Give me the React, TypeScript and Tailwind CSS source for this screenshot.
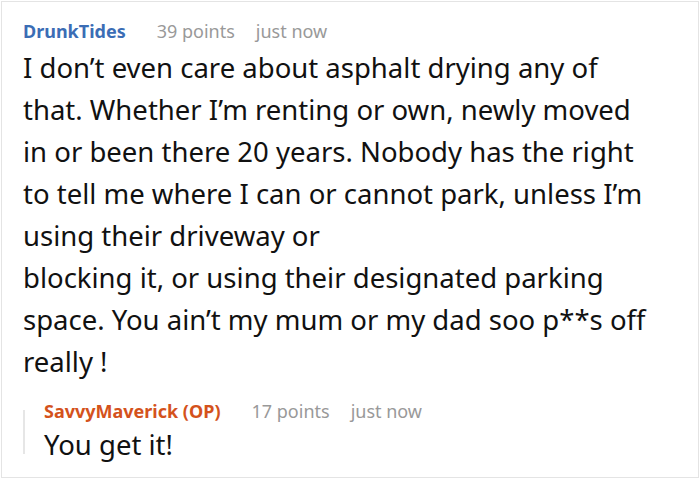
import React from 'react';

// Comment with a single reply
interface MetaProps {
  name: string;
  points: number;
  time: string;
  nameColor: string;
}

const Meta: React.FC<MetaProps> = ({ name, points, time, nameColor }) => (
  <div className="flex items-baseline text-[18px] leading-[24px]">
    <span className={`font-bold ${nameColor} mr-[31px]`}>{name}</span>
    <span className="text-[#999999] mr-[21px]">{points} points</span>
    <span className="text-[#999999]">{time}</span>
  </div>
);

export default function App() {
  return (
    <div className="bg-white w-[700px] h-[478px] overflow-hidden" style={{ fontFamily: '"Noto Sans", "Open Sans", sans-serif' }}>
      <div className="ml-px mt-px w-[698px] h-[477px] border border-[#e4e4e4] pl-[21px] pt-[17px]">
        <Meta name="DrunkTides" points={39} time="just now" nameColor="text-[#3b6db5]" />
        <p className="mt-[4px] w-[638px] text-[27.5px] leading-[42px] text-[#111111]">
          I don’t even care about asphalt drying any of that. Whether I’m renting or own, newly moved in or been there 20 years. Nobody has the right to tell me where I can or cannot park, unless I’m using their driveway or
          <br />
          blocking it, or using their designated parking space. You ain’t my mum or my dad soo p**s off really !
        </p>

        <div className="flex mt-[16px]">
          <div className="w-[2px] bg-[#e6e6e6] my-[11px]" />
          <div className="ml-[19px]">
            <Meta name="SavvyMaverick (OP)" points={17} time="just now" nameColor="text-[#d4521c]" />
            <p className="mt-[2px] text-[27.5px] leading-[40px] text-[#111111]">You get it!</p>
          </div>
        </div>
      </div>
    </div>
  );
}
